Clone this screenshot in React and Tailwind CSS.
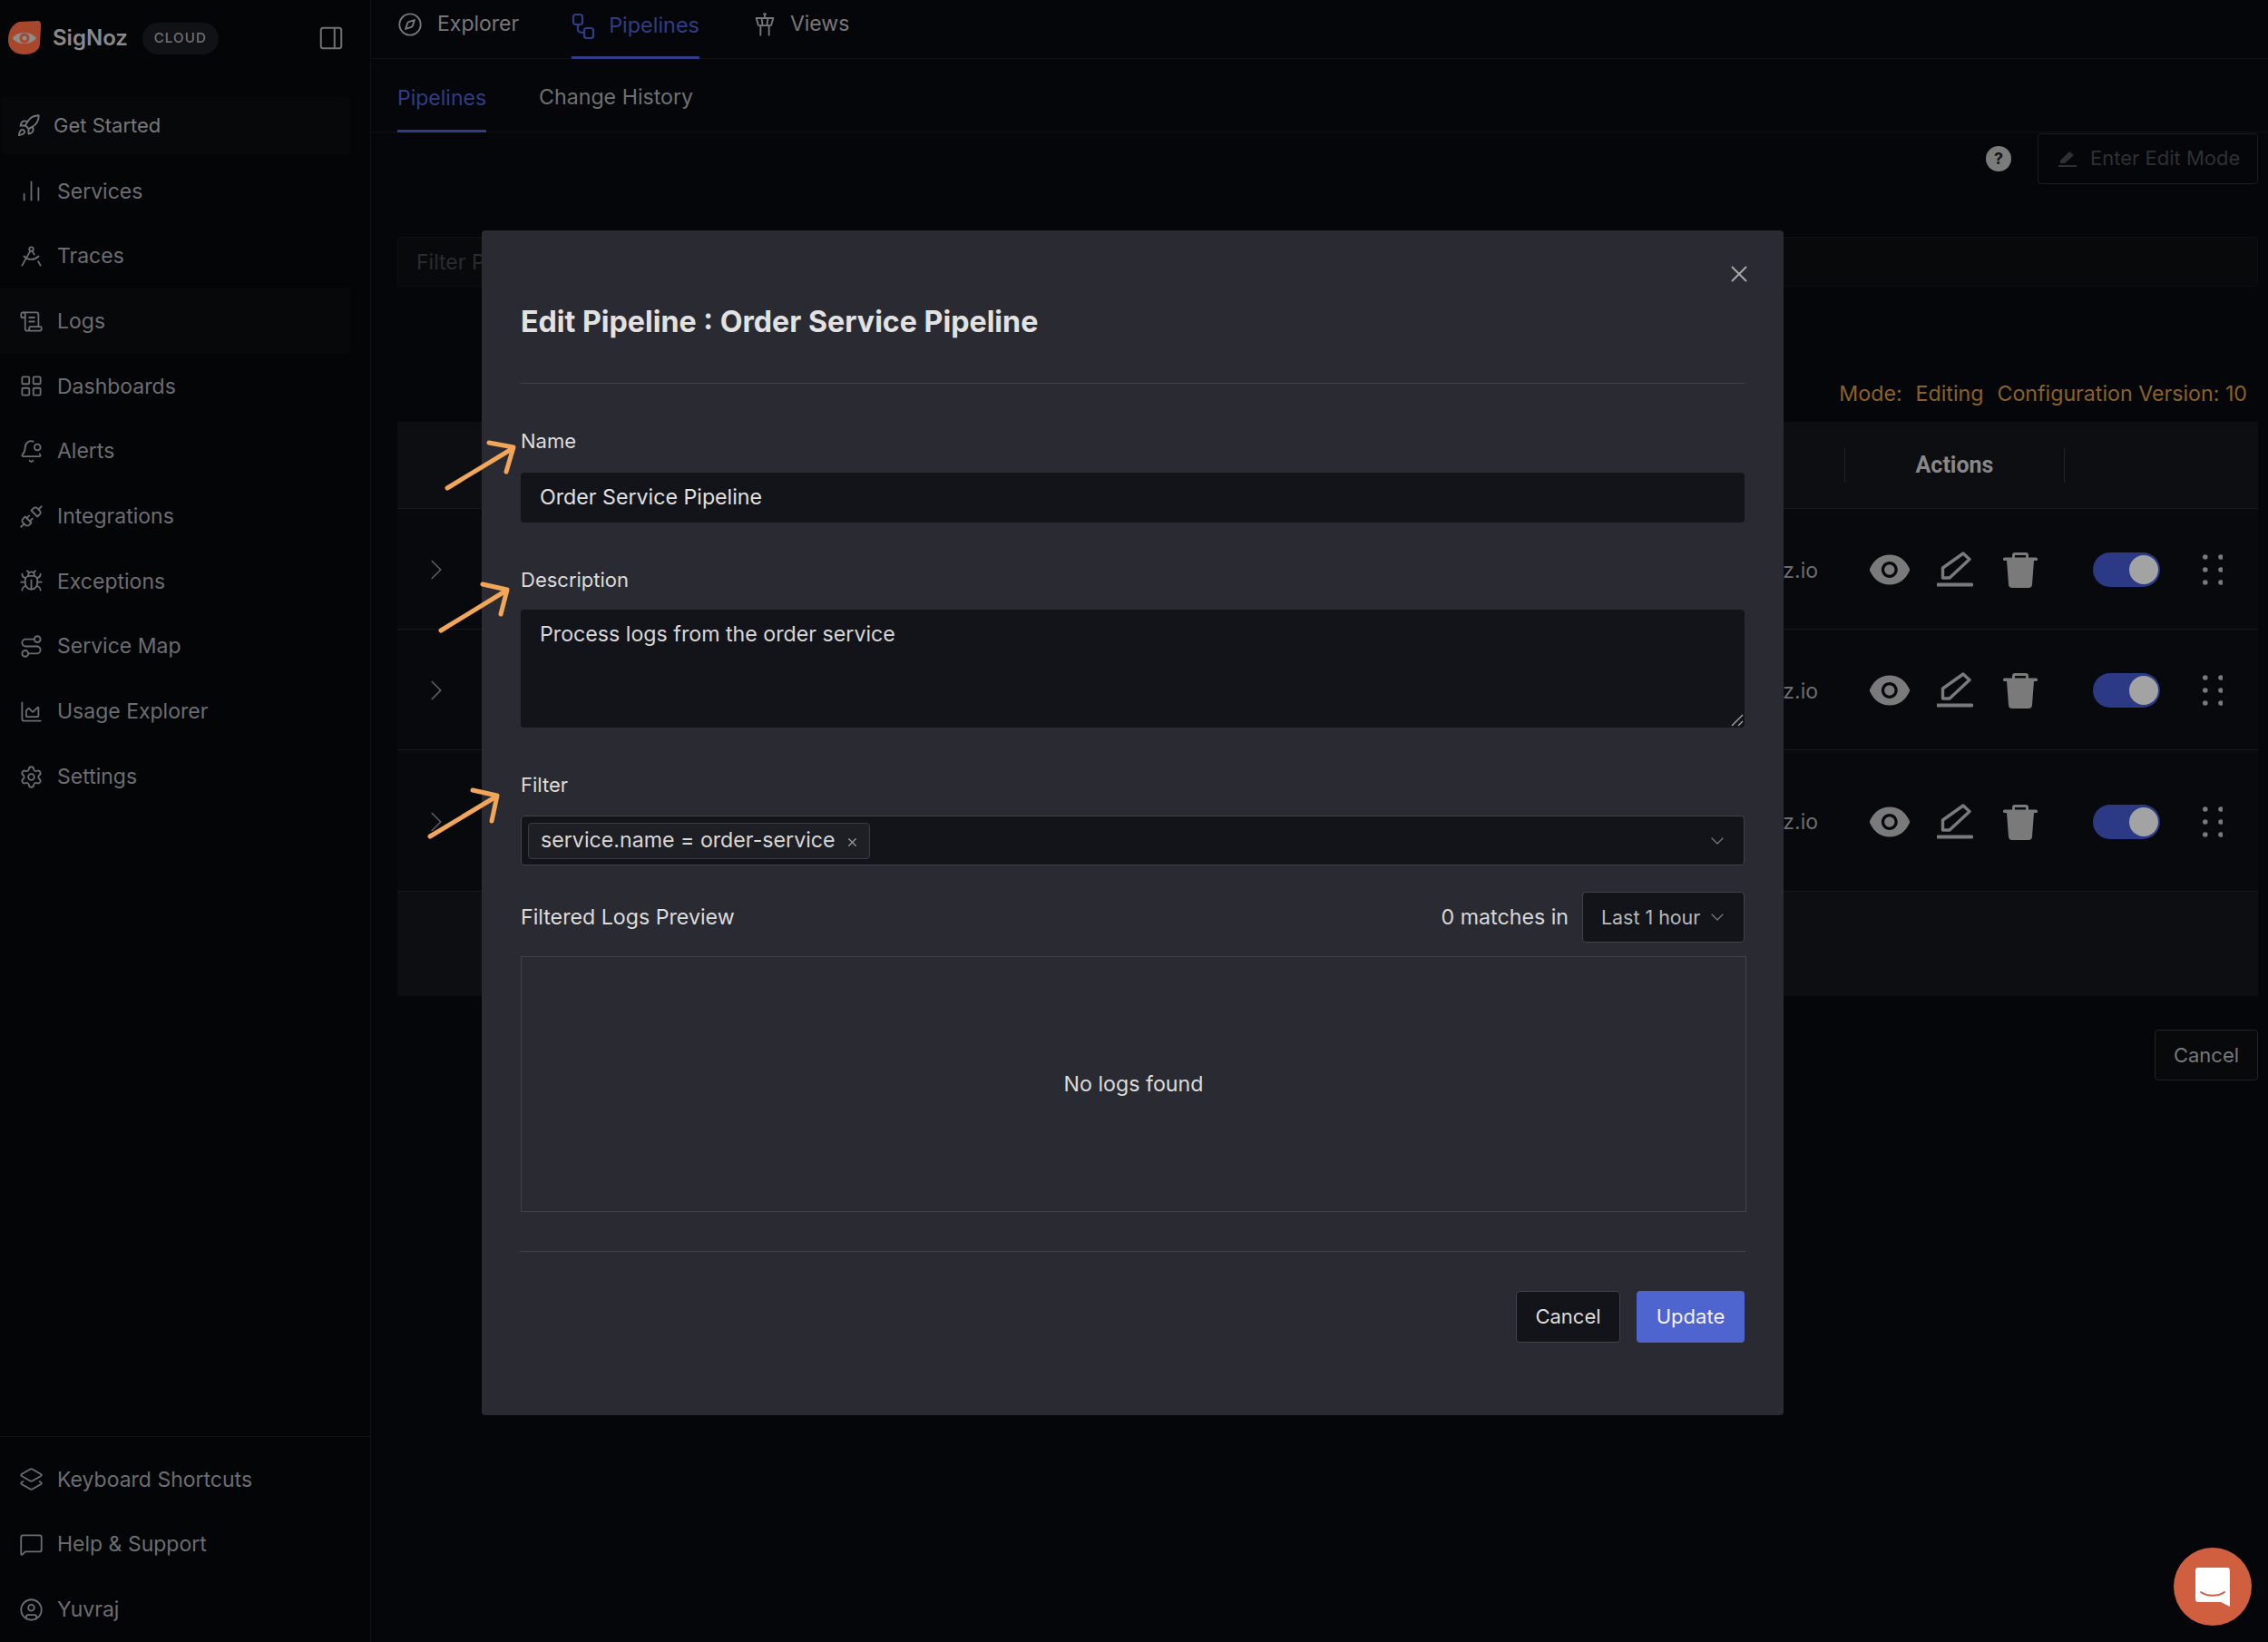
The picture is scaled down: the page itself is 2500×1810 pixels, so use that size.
import React from "react";
import {
  Rocket, ChartNoAxesColumn, DraftingCompass, ScrollText, LayoutGrid, BellDot, Unplug, Bug, Route, ChartArea,
  Settings, Layers2, MessageSquare, CircleUser, PanelRight, Compass, TowerControl, ChevronRight, ChevronDown, X,
} from "lucide-react";
import { AiFillEye } from "react-icons/ai";

const navItems = [
  { label: "Services", icon: ChartNoAxesColumn },
  { label: "Traces", icon: DraftingCompass },
  { label: "Logs", icon: ScrollText, active: true },
  { label: "Dashboards", icon: LayoutGrid },
  { label: "Alerts", icon: BellDot },
  { label: "Integrations", icon: Unplug },
  { label: "Exceptions", icon: Bug },
  { label: "Service Map", icon: Route },
  { label: "Usage Explorer", icon: ChartArea },
  { label: "Settings", icon: Settings },
];

const bottomItems = [
  { label: "Keyboard Shortcuts", icon: Layers2 },
  { label: "Help & Support", icon: MessageSquare },
  { label: "Yuvraj", icon: CircleUser },
];

const rows = [
  { height: "h-[133px]" },
  { height: "h-[133px]" },
  { height: "h-[156px]" },
];

const Logo = () => (
  <svg width="38" height="38" viewBox="0 0 38 38" className="shrink-0">
    <path d="M13 1 L34 0 C37 0 37 3 37 6 L36 26 C35 33 28 37 19 37 C8 37 1 31 1 21 C1 12 5 4 13 1 Z" fill="#a8472b" />
    <path d="M6 19 C11 11 26 11 32 19 C26 27 11 27 6 19 Z" fill="#8d8d8d" />
    <circle cx="19" cy="19" r="5.5" fill="#a8472b" />
    <circle cx="19" cy="19" r="2.5" fill="#8d8d8d" />
  </svg>
);

const PipelineIcon = () => (
  <svg width="26" height="30" viewBox="0 0 26 30" fill="none" stroke="#2f3d86" strokeWidth="2.2">
    <rect x="2" y="2" width="10" height="11" rx="2.5" />
    <rect x="14" y="17" width="10" height="11" rx="2.5" />
    <path d="M7 13 V19 C7 21 9 22 14 22" />
  </svg>
);

const PenIcon = () => (
  <svg width="40" height="40" viewBox="0 0 40 40" fill="none" stroke="#7a7a7a" strokeWidth="3.4">
    <path d="M6.5 29 V18 L29 2 L36 8.5 L14 29 Z" strokeLinejoin="round" />
    <path d="M0.5 36.5 H38.5" strokeWidth="3.8" strokeLinecap="round" />
  </svg>
);

const TrashIcon = () => (
  <svg width="38" height="40" viewBox="0 0 38 40" fill="#7a7a7a">
    <path d="M10 7 V4 C10 2 11 1 13 1 H25 C27 1 28 2 28 4 V7 H25 V4 H13 V7 Z" />
    <rect x="0" y="6.5" width="38" height="3.5" rx="1.5" />
    <path d="M4 10 H34 L32 36 C32 38.5 30.5 40 28 40 H10 C7.5 40 6 38.5 6 36 Z" />
  </svg>
);

const DotsIcon = () => (
  <svg width="22" height="34" viewBox="0 0 22 34" fill="#7a7a7a">
    {[3, 17, 31].map((y) => (
      <g key={y}>
        <circle cx="2.8" cy={y} r="2.8" />
        <circle cx="20" cy={y} r="2.8" />
      </g>
    ))}
  </svg>
);

const Arrow = ({ line, head }) => (
  <>
    <path d={line} />
    <path d={head} />
  </>
);

const PipelineRow = ({ height }) => (
  <div className={`${height} pt-[2px] grid grid-cols-[1fr_243px_213px] items-center border-b border-[#17181b] bg-[#08090c]`}>
    <div className="flex items-center justify-between pl-[24px] pr-[29px]">
      <ChevronRight size={38} strokeWidth={1.1} className="text-[#5c5c5e]" />
      <span className="text-[23px] text-[#6c6c6e] mt-[2px]">pipelines@signoz.io</span>
    </div>
    <div className="flex items-center justify-center">
      <div className="w-[72px] flex justify-center"><AiFillEye size={52} color="#7a7a7a" /></div>
      <div className="w-[72px] flex justify-center"><PenIcon /></div>
      <div className="w-[72px] flex justify-center"><TrashIcon /></div>
    </div>
    <div className="flex items-center pl-[31px]">
      <div className="w-[74px] h-[38px] rounded-full bg-[#2c3a85] flex items-center justify-end pr-[2px]">
        <div className="w-[32px] h-[32px] rounded-full bg-[#a3a3a3]" />
      </div>
      <div className="ml-[47px]"><DotsIcon /></div>
    </div>
  </div>
);

const App = () => {
  return (
    <div className="relative w-[2500px] h-[1810px] overflow-hidden flex bg-[#050609] font-['Inter',sans-serif] text-[23px]">
      {/* sidebar */}
      <aside className="w-[409px] h-full shrink-0 flex flex-col justify-between border-r border-[#101114] bg-[#040507]">
        <div>
          <div className="h-[84px] flex items-center pl-[8px] pr-[28px]">
            <Logo />
            <span className="ml-[12px] text-[24px] font-semibold text-[#8a8a8b]">SigNoz</span>
            <span className="ml-[16px] w-[84px] h-[35px] rounded-full bg-[#101216] flex items-center justify-center text-[15px] font-medium tracking-[1.2px] text-[#707173]">CLOUD</span>
            <PanelRight size={30} strokeWidth={1.6} className="ml-auto text-[#707173]" />
          </div>
          <div className="mt-[23px] ml-[2px] w-[384px] h-[63px] flex items-center pl-[16px] rounded bg-[#07080a] text-[22px] text-[#76777a]">
            <Rocket size={27} strokeWidth={1.6} />
            <span className="ml-[14px]">Get Started</span>
          </div>
          <nav className="mt-[5px]">
            {navItems.map((item) => (
              <div key={item.label} className={`h-[71.7px] flex items-center pl-[21px] text-[#6c6d70] ${item.active ? "w-[386px] bg-[#07080a]" : ""}`}>
                <item.icon size={27} strokeWidth={1.6} />
                <span className="ml-[15px]">{item.label}</span>
              </div>
            ))}
          </nav>
        </div>
        <div className="h-[227px] border-t border-[#101114] pt-[11px]">
          {bottomItems.map((item) => (
            <div key={item.label} className="h-[71.7px] flex items-center pl-[21px] text-[#6c6d70]">
              <item.icon size={27} strokeWidth={1.6} />
              <span className="ml-[15px]">{item.label}</span>
            </div>
          ))}
        </div>
      </aside>

      {/* page behind the modal */}
      <main className="flex-1 min-w-0">
        <div className="h-[65px] flex items-end gap-[58px] pl-[29px] border-b border-[#101114]">
          <div className="h-[51px] flex items-start gap-[16px] text-[#777779]">
            <Compass size={28} strokeWidth={1.6} />
            <span className="-mt-[4px]">Explorer</span>
          </div>
          <div className="h-[51px] flex items-start gap-[15px] text-[#2f3d86] border-b-[3px] border-[#2f3d86] -mb-px">
            <PipelineIcon />
            <span className="-mt-[4px] text-[23.4px]">Pipelines</span>
          </div>
          <div className="h-[51px] flex items-start gap-[14px] text-[#777779]">
            <TowerControl size={28} strokeWidth={1.6} />
            <span className="-mt-[4px]">Views</span>
          </div>
        </div>
        <div className="h-[81px] flex items-end gap-[58px] pl-[29px] border-b border-[#101114]">
          <div className="h-[55px] text-[#2f3d86] border-b-[3px] border-[#2f3d86] -mb-px">Pipelines</div>
          <div className="h-[55px] text-[#6f7072] text-[23.2px]">Change History</div>
        </div>

        <div className="pl-[29px] pr-[11px]">
          <div className="h-[57px] flex items-center justify-end">
            <div className="w-[28px] h-[28px] rounded-full bg-[#7b7b7b] flex items-center justify-center text-[18px] font-bold text-[#141414]">?</div>
            <div className="ml-[29px] w-[243px] h-[56px] rounded border border-[#1d1e21] flex items-center pl-[22px] text-[22px] text-[#2f3033]">
              <svg width="20" height="20" viewBox="0 0 20 20" fill="#2f3033">
                <path d="M2 12 L12 2 L17 6 L7 15 H2 Z" />
                <rect x="0" y="17" width="20" height="2" />
              </svg>
              <span className="ml-[15px]">Enter Edit Mode</span>
            </div>
          </div>
          <div className="mt-[58px] h-[55px] pt-[2px] rounded border border-[#0f1013] bg-[#08090b] flex items-center pl-[20px] text-[#2b2c2f]">Filter Pipelines</div>
          <div className="mt-[90px] pb-[3px] h-[59px] flex items-center justify-end gap-[15px] pr-[12px] text-[23.2px] text-[#8a6225]">
            <span>Mode:</span>
            <span>Editing</span>
            <span>Configuration Version: 10</span>
          </div>
          <div className="h-[96px] grid grid-cols-[1fr_243px_213px] items-center border-b border-[#17181b] bg-[#0d0e11]">
            <div />
            <div className="h-[38px] flex items-center justify-center border-x border-[#222327] font-['Roboto',sans-serif] font-bold text-[25px] text-[#88888b]">Actions</div>
            <div />
          </div>
          {rows.map((row, i) => (
            <PipelineRow key={i} height={row.height} />
          ))}
          <div className="h-[115px] bg-[#0d0e11]" />
          <div className="mt-[37px] flex justify-end">
            <div className="w-[114px] h-[56px] rounded border border-[#232427] bg-[#08090b] flex items-center justify-center text-[22px] text-[#77787a]">Cancel</div>
          </div>
        </div>
      </main>

      {/* modal */}
      <div className="absolute left-[531px] top-[254px] w-[1435px] h-[1306px] rounded bg-[#2a2b32] px-[43px] text-[23.2px] text-[#dcdcdc]">
        <X size={30} strokeWidth={1.6} className="absolute right-[34px] top-[33px] text-[#a8a8aa]" />
        <div className="h-[169px] border-b border-[#42434a] flex items-center pt-[34px]">
          <h2 className="text-[32.2px] font-bold text-[#e2e2e2]">Edit Pipeline : Order Service Pipeline</h2>
        </div>

        <label className="block mt-[47px] leading-[32px] text-[22px]">Name</label>
        <div className="mt-[19px] h-[55px] rounded bg-[#131419] flex items-center pl-[21px] text-[#e0e0e0]">Order Service Pipeline</div>

        <label className="block mt-[47px] leading-[32px] text-[22px]">Description</label>
        <div className="relative mt-[17px] h-[130px] rounded bg-[#131419] pl-[21px] pt-[10px] text-[#d8d8d8]">
          Process logs from the order service
          <svg width="14" height="14" viewBox="0 0 14 14" className="absolute right-[1px] bottom-[1px]" stroke="#a6a6a6" strokeWidth="1.4">
            <path d="M13 1 L1 13 M13 8 L8 13" />
          </svg>
        </div>

        <label className="block mt-[47px] leading-[32px] text-[22px]">Filter</label>
        <div className="mt-[18px] h-[55px] rounded border border-[#42434a] bg-[#131419] flex items-center pl-[7px] pr-[17px]">
          <div className="h-[40px] rounded border border-[#3a3c44] bg-[#1d1f25] flex items-center pl-[13px] pr-[11px] text-[#d8d8d8]">
            service.name = order-service
            <X size={15} strokeWidth={2} className="ml-[11px] mt-[3px] text-[#9a9a9c]" />
          </div>
          <ChevronDown size={24} strokeWidth={1.3} className="ml-auto text-[#77787c]" />
        </div>

        <div className="mt-[29px] h-[56px] flex items-center justify-between">
          <span className="text-[#dcdcdc]">Filtered Logs Preview</span>
          <div className="flex items-center">
            <span className="text-[#d8d8d8]">0 matches in</span>
            <div className="ml-[15px] w-[179px] h-[56px] rounded border border-[#42434a] bg-[#131419] flex items-center pl-[20px] pr-[17px] text-[21.4px] text-[#b8b8ba]">
              Last 1 hour
              <ChevronDown size={24} strokeWidth={1.3} className="ml-auto text-[#77787c]" />
            </div>
          </div>
        </div>

        <div className="mt-[15px] -mr-[2px] h-[282px] border border-[#42434a] flex items-center justify-center text-[#dcdcdc]">No logs found</div>

        <div className="mt-[43px] -mr-[1px] border-t border-[#42434a] pt-[43px] flex justify-end pr-[1px]">
          <div className="w-[115px] h-[57px] rounded border border-[#42434a] bg-[#131419] flex items-center justify-center text-[22px] text-[#dcdcdc]">Cancel</div>
          <div className="ml-[18px] w-[119px] h-[57px] rounded bg-[#4e65d0] flex items-center justify-center text-[22px] text-[#f2f2f6]">Update</div>
        </div>
      </div>

      {/* arrows drawn on the screenshot */}
      <svg className="absolute left-[460px] top-[470px]" width="120" height="470" viewBox="460 470 120 470" fill="none" stroke="#f2a65a" strokeWidth="5" strokeLinecap="round" strokeLinejoin="round">
        <Arrow line="M493 538 L564 495" head="M539 488 L566 493 L558 520" />
        <Arrow line="M486 695 L558 651" head="M532 644 L559 650 L552 677" />
        <Arrow line="M474 922 L547 878" head="M521 871 L548 877 L542 905" />
      </svg>

      {/* chat launcher */}
      <div className="absolute left-[2396px] top-[1706px] w-[86px] h-[86px] rounded-full bg-[#cf5f3f] flex items-center justify-center">
        <svg width="38" height="43" viewBox="0 0 38 43">
          <path d="M3 0 H35 C36.7 0 38 1.3 38 3 V43 L28 38 H3 C1.3 38 0 36.7 0 35 V3 C0 1.3 1.3 0 3 0 Z" fill="#ffffff" />
          <path d="M6 27 C13 32 25 32 32 27" fill="none" stroke="#cf5f3f" strokeWidth="2" strokeLinecap="round" />
        </svg>
      </div>
    </div>
  );
};

export default App;
